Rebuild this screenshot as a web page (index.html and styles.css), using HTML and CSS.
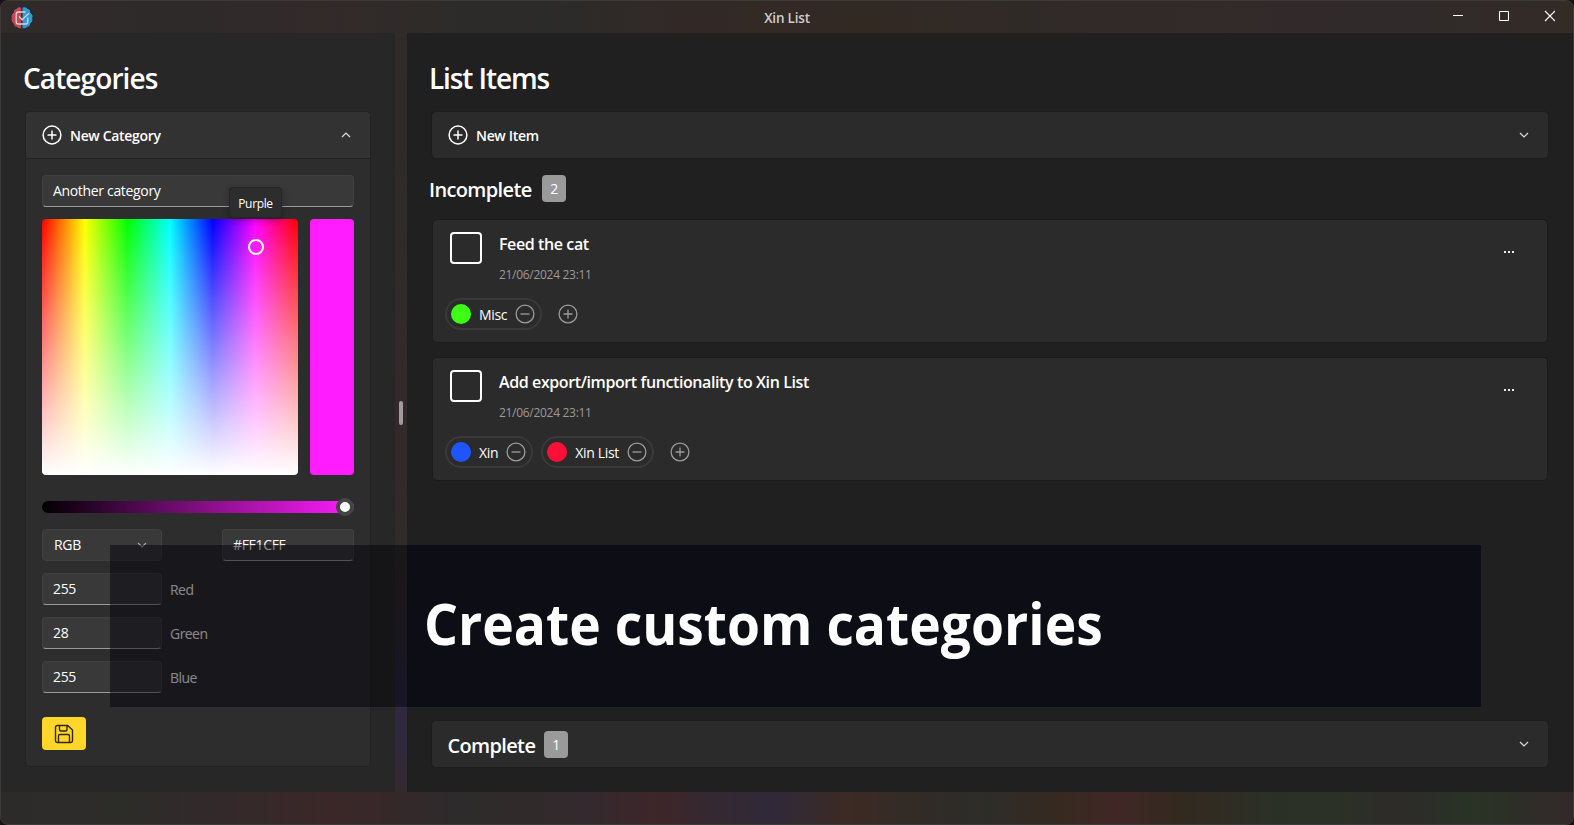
FILE: index.html
```html
<!DOCTYPE html>
<html lang="en">
<head>
<meta charset="utf-8">
<title>Xin List</title>
<link rel="stylesheet" href="styles.css">
</head>
<body>
<svg class="defs" width="0" height="0">
  <symbol id="plus" viewBox="0 0 20 20"><circle cx="10" cy="10" r="8.9"/><path d="M10 5.5v9M5.5 10h9"/></symbol>
  <symbol id="minus" viewBox="0 0 20 20"><circle cx="10" cy="10" r="8.9"/><path d="M5.5 10h9"/></symbol>
  <symbol id="down" viewBox="0 0 10 6"><path d="M1 1l4 4 4-4"/></symbol>
  <symbol id="up" viewBox="0 0 10 6"><path d="M1 5l4-4 4 4"/></symbol>
</svg>
<div class="window">
  <header class="titlebar">
    <svg class="logo" viewBox="0 0 24 24">
      <path d="M12 1.5C10 .2 7.600 .6 6.600 2.400 4.200 2.500 3 4.600 3.400 6.600 1 8 .5 10.300 1.300 12 .5 14.500 1.500 16.500 3.200 17.400 3.400 19.700 5 21.200 6.800 21.200 8 23 10.500 23.400 12 22z" fill="#c8474c" stroke="#1d2740" stroke-width="1"/>
      <path d="M12 1.500c2-1.300 4.400-.9 5.400.9 2.400.1 3.600 2.200 3.200 4.200 2.400 1.400 2.900 3.700 2.100 5.400.8 2.500-.2 4.500-1.900 5.400-.2 2.300-1.800 3.800-3.600 3.800-1.200 1.800-3.700 2.200-5.200.8z" fill="#2f9bcb" stroke="#1d2740" stroke-width="1"/>
      <path d="M15.500 6H8.500Q6.200 6 6.200 8.300V15.700Q6.200 18 8.500 18H15.500Q17.800 18 17.800 15.700V11.500M9 10.500l3.200 3.300 6.600-6.600" fill="none" stroke="#d9d3d6" stroke-width="1.300"/>
    </svg>
    <span class="window-title">Xin List</span>
    <svg class="controls" viewBox="0 0 102 12" width="102" height="12">
      <path d="M0 5.500h10"/><rect x="46.500" y="1.500" width="9" height="9" rx=".5"/><path d="M92 1l10 10M102 1l-10 10"/>
    </svg>
  </header>
  <div class="panes">
    <aside class="sidebar">
      <h1 class="heading">Categories</h1>
      <section class="expander open">
        <div class="expander-head">
          <svg class="ic"><use href="#plus"/></svg><span class="head-label">New Category</span>
          <svg class="chev"><use href="#up"/></svg>
        </div>
        <div class="expander-body">
          <div class="field name-field">Another category</div>
          <div class="picker">
            <div class="spectrum"><span class="ring"></span><span class="tip">Purple</span></div>
            <div class="preview"></div>
          </div>
          <div class="slider"><span class="thumb"></span></div>
          <div class="mode-row">
            <div class="select">RGB<svg class="chev dim"><use href="#down"/></svg></div>
            <div class="field hex">#FF1CFF</div>
          </div>
          <div class="channel"><div class="field num">255</div><span class="channel-label">Red</span></div>
          <div class="channel"><div class="field num">28</div><span class="channel-label">Green</span></div>
          <div class="channel"><div class="field num">255</div><span class="channel-label">Blue</span></div>
          <div class="save">
            <svg viewBox="0 0 20 20" width="20" height="20"><path d="M3.500 1.500H13.700L18.500 6V16.500Q18.500 18.500 16.500 18.500H3.500Q1.500 18.500 1.500 16.500V3.500Q1.500 1.500 3.500 1.500zM5.500 1.500V5.500Q5.500 7 7 7H11.500Q13 7 13 5.500V1.500M4.500 18.500V12Q4.500 10.500 6 10.500H14Q15.500 10.500 15.500 12V18.500"/></svg>
          </div>
        </div>
      </section>
    </aside>
    <div class="splitter"><span class="grip"></span></div>
    <main class="content">
      <h1 class="heading">List Items</h1>
      <section class="expander">
        <div class="expander-head">
          <svg class="ic"><use href="#plus"/></svg><span class="head-label">New Item</span>
          <svg class="chev"><use href="#down"/></svg>
        </div>
      </section>
      <div class="group"><h2 class="subheading">Incomplete</h2><span class="badge">2</span></div>
      <article class="item">
        <div class="item-top">
          <span class="checkbox"></span>
          <div class="item-text"><div class="item-title feed">Feed the cat</div><div class="date">21/06/2024 23:11</div></div>
          <span class="more"><i></i><i></i><i></i></span>
        </div>
        <div class="tags">
          <span class="tag"><i class="dot green"></i><span class="tag-name">Misc</span><svg class="ic"><use href="#minus"/></svg></span>
          <svg class="ic add"><use href="#plus"/></svg>
        </div>
      </article>
      <article class="item">
        <div class="item-top">
          <span class="checkbox"></span>
          <div class="item-text"><div class="item-title">Add export/import functionality to Xin List</div><div class="date">21/06/2024 23:11</div></div>
          <span class="more"><i></i><i></i><i></i></span>
        </div>
        <div class="tags">
          <span class="tag"><i class="dot blue"></i><span class="tag-name">Xin</span><svg class="ic"><use href="#minus"/></svg></span>
          <span class="tag"><i class="dot red"></i><span class="tag-name">Xin List</span><svg class="ic"><use href="#minus"/></svg></span>
          <svg class="ic add"><use href="#plus"/></svg>
        </div>
      </article>
      <section class="expander complete">
        <div class="expander-head">
          <h2 class="subheading">Complete</h2><span class="badge">1</span>
          <svg class="chev"><use href="#down"/></svg>
        </div>
      </section>
    </main>
  </div>
  <footer class="bottombar"></footer>
  <div class="caption"><span class="caption-text">Create custom categories</span></div>
</div>
</body>
</html>
```

FILE: styles.css
```css
* { box-sizing: border-box; }
body {
  margin: 0;
  background: #1a1212;
  font-family: "Open Sans", "Noto Sans", sans-serif;
  font-size: 14px;
  line-height: 20px;
  letter-spacing: -0.33px;
  color: #fff;
  overflow: hidden;
}
h1, h2 { margin: 0; font-weight: 600; }
svg { fill: none; stroke: currentColor; flex: none; }
.defs { position: absolute; }

.window {
  position: relative;
  width: 1574px;
  height: 825px;
  display: flex;
  flex-direction: column;
  border: 1px solid #3d3a3a;
  border-radius: 8px;
  overflow: hidden;
  background: #2e2929;
}

.titlebar {
  height: 32px;
  display: grid;
  grid-template-columns: 1fr auto 1fr;
  align-items: center;
  padding: 0 9px;
  background: linear-gradient(90deg, #302b29, #2e2a2a 12%, #332a2a 20%, #2e2b29 27%, #2b2b29 35%, #322927 43%, #332923 55%, #302a27 65%, #332a2a 78%, #302a2a 90%, #322b26);
}
.logo { width: 24px; height: 24px; margin-top: 1px; stroke: none; }
.window-title {
  font-size: 13.5px;
  font-weight: 600;
  letter-spacing: -0.2px;
  color: #d0cccb;
  padding-top: 2px;
}
.controls { justify-self: end; margin-top: -2px; margin-right: 9px; stroke-width: 1.100; }

.panes { height: 759px; display: flex; }
.sidebar { width: 394px; background: #272727; padding: 30px 25px 0; }
.splitter {
  width: 12px;
  display: flex;
  align-items: center;
  justify-content: center;
  background: linear-gradient(#302a29, #2f2b28 24%, #33292c 48%, #33292b 58%, #302b29 66%, #332a2b 75%, #2e2940 86%, #2f293e 93%, #34292e);
}
.grip { width: 4px; height: 24px; border-radius: 2px; background: #9f9c9d; }
.content { flex: 1; background: #202020; padding: 30px 25px 0 25px; display: flex; flex-direction: column; }

.heading { font-size: 28px; line-height: 30px; height: 30px; letter-spacing: -0.9px; margin-left: -3px; }
.content .heading { letter-spacing: -1.1px; }

.expander { margin-top: 18px; border: 1px solid #1d1d1d; border-radius: 5px; background: #2b2b2b; }
.expander.open { width: 346px; margin-left: -1px; height: 656px; background: #2d2d2d; border-color: #232323; }
.content .expander { margin-left: -1px; margin-right: -1px; }
.expander-head { height: 46px; display: flex; align-items: center; padding: 0 19px 0 15.500px; }
.open .expander-head { background: #323232; border-radius: 4px 4px 0 0; height: 47px; border-bottom: 1px solid #222; }
.ic { width: 20px; height: 20px; stroke-width: 1.300; }
.expander-head .ic { margin-top: -1px; stroke-width: 1.500; }
.head-label { margin-left: 8.500px; padding-top: 1px; font-weight: 600; }
.chev { width: 10px; height: 6px; margin-left: auto; color: #ddd; stroke-width: 1.200; }
.chev.dim { color: #aaa; }

.expander-body { padding: 16px 15px 0 16px; }
.field, .select {
  height: 32px;
  padding: 5px 11px;
  border: 1px solid #404040;
  border-radius: 4px;
  background: #393939;
}
.field { border-bottom-color: #9a9a9a; padding-left: 10px; }
.name-field { width: 312px; }
.picker { display: flex; gap: 12px; margin-top: 12px; }
.spectrum {
  position: relative;
  width: 256px;
  height: 256px;
  border-radius: 4px;
  background: linear-gradient(transparent, #fff),
    linear-gradient(90deg, #f00, #ff0 16.67%, #0f0 33.33%, #0ff 50%, #00f 66.67%, #f0f 83.33%, #f00);
}
.ring { position: absolute; left: 206px; top: 20px; width: 16px; height: 16px; border: 2px solid #fff; border-radius: 50%; }
.tip {
  position: absolute;
  left: 187px;
  top: -32px;
  width: 53px;
  height: 31px;
  border: 1px solid #262626;
  border-radius: 4px;
  background: #2d2d2d;
  font-size: 12px;
  line-height: 31px;
  letter-spacing: -0.35px;
  text-align: center;
  box-shadow: 0 2px 6px rgba(0, 0, 0, .3);
}
.preview { width: 44px; border-radius: 4px; background: #ff1cff; }
.slider { position: relative; width: 312px; height: 12px; margin-top: 26px; border-radius: 6px; background: linear-gradient(90deg, #000, #ff1cff); }
.thumb { position: absolute; left: 294px; top: -3px; width: 18px; height: 18px; border: 4px solid #454545; border-radius: 50%; background: #fff; }
.mode-row { display: flex; justify-content: space-between; width: 312px; margin-top: 16px; }
.select { width: 120px; display: flex; align-items: center; padding-right: 14px; }
.hex { width: 132px; }
.channel { display: flex; margin-top: 12px; }
.num { width: 120px; }
.channel-label { margin: 7px 0 0 8px; letter-spacing: -0.55px; }
.save {
  width: 44px;
  height: 33px;
  margin-top: 24px;
  display: flex;
  align-items: center;
  justify-content: center;
  border-radius: 4px;
  background: #ffd629;
  color: #33290a;
}
.save svg { stroke-width: 1.400; }

.group { display: flex; margin-top: 16px; height: 27px; }
.subheading { font-size: 20px; line-height: 28px; letter-spacing: -0.65px; }
.group .subheading { margin-left: -3px; padding-top: 1px; width: 113px; }
.badge {
  width: 24px;
  height: 27px;
  border-radius: 4px;
  background: #9a9a9a;
  text-align: center;
  line-height: 28px;
}

.item { height: 124px; margin: 17px 0 0; border: 1px solid #1c1c1c; border-radius: 5px; background: #2b2b2b; padding: 12px 33px 0 12px; }
.item + .item { margin-top: 14px; }
.item-top { display: flex; height: 66px; }
.checkbox { width: 32px; height: 32px; margin-left: 5px; border: 2px solid #fff; border-radius: 4px; }
.item-text { margin-left: 17px; }
.item-title { font-size: 16px; font-weight: 600; line-height: 24px; letter-spacing: -0.4px; }
.date { margin-top: 9px; font-size: 12px; line-height: 20px; letter-spacing: -0.3px; color: #9a9a9a; }
.more { margin: 19px 0 0 auto; display: flex; gap: 2px; height: 2px; }
.more i { width: 2px; background: #eee; }
.tags { display: flex; align-items: center; gap: 8px; height: 32px; }
.tag { height: 32px; display: flex; align-items: center; border: 2px solid #393939; border-radius: 16px; padding: 0 5px 0 4px; }
.dot { width: 20px; height: 20px; border-radius: 50%; }
.green { background: #3cff14; }
.blue { background: #1f55ff; }
.red { background: #ff0f37; }
.tag-name { margin: 2px 8px 0; }
.tags .ic { color: #9c9c9c; margin-top: -1px; }
.tags .add { margin-left: 8px; }

.content .complete { margin-top: auto; margin-bottom: 24px; }
.complete .subheading { padding-top: 3px; width: 96.500px; }
.complete .badge { margin-top: 1px; }

.bottombar {
  flex: 1;
  background: linear-gradient(90deg, #2d2b2a, #2c2c29 8%, #33292a 14%, #3b2727 21%, #352829 25%, #2d2b2c 29%, #302a2a 33%, #33292e 37%, #3d262a 42%, #352830 45%, #2f293a 49%, #3c2a23 54%, #302b27 59%, #2d2d28 63%, #36291f 67%, #402726 71%, #33291f 75%, #2b3027 81%, #2b3127 85%, #2d2c28 88%, #2c2c29 90%, #293325 93.5%, #32292a);
}

.caption {
  position: absolute;
  left: 109px;
  top: 544px;
  width: 1371px;
  height: 162px;
  background: linear-gradient(90deg, rgba(0, 0, 8, .47) 297px, rgba(0, 0, 14, .6) 297px);
}
.caption-text {
  display: block;
  margin-left: 313.500px;
  padding-top: 38px;
  font-size: 57px;
  line-height: 80px;
  font-weight: 700;
  letter-spacing: 0;
  white-space: nowrap;
  transform: scaleX(.937);
  transform-origin: 0 0;
}
```
